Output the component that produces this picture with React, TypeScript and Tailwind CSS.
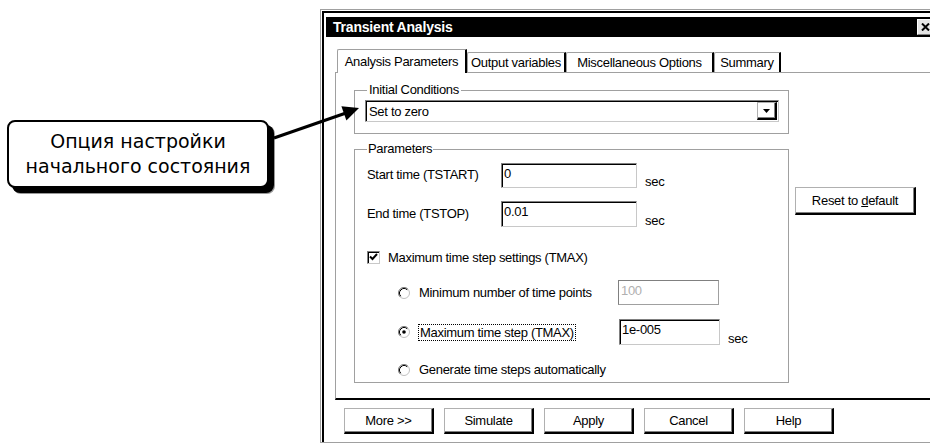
import React from 'react';

// Win95-style bevels, approximated in grey tones of the screenshot
const raised =
  'border border-t-[#b0b0b0] border-l-[#b0b0b0] border-r-2 border-b-2 border-r-black border-b-black shadow-[inset_-1px_-1px_0_#808080] bg-white';
const sunken =
  'border border-t-[#808080] border-l-[#808080] border-r-[#c8c8c8] border-b-[#c8c8c8] shadow-[inset_1px_1px_0_#000] bg-white';

const Radio = ({ checked = false }: { checked?: boolean }) => (
  <svg width="12" height="12" viewBox="0 0 12 12" className="shrink-0">
    <circle cx="6" cy="6" r="5.5" fill="#fff" stroke="#c0c0c0" />
    <path d="M2.11 9.89A5.5 5.5 0 0 1 9.89 2.11" fill="none" stroke="#808080" />
    <path d="M2.82 9.18A4.5 4.5 0 0 1 9.18 2.82" fill="none" stroke="#000" />
    {checked && <circle cx="6" cy="6" r="1.8" fill="#000" />}
  </svg>
);

const Field = ({ value, w, h, disabled = false }: { value: string; w: string; h: string; disabled?: boolean }) => (
  <div
    className={`${w} ${h} shrink-0 pl-[2px] pt-[2px] leading-[15px] ${
      disabled
        ? 'border border-[#a0a0a0] border-t-[#808080] border-l-[#808080] bg-white text-[#b0b0b0]'
        : sunken
    }`}
  >
    {value}
  </div>
);

const Tab = ({ label, w, active = false }: { label: string; w: string; active?: boolean }) => (
  <div
    className={`${w} flex shrink-0 justify-center rounded-tl-[2px] border-l border-t border-r-2 border-[#a0a0a0] border-r-black bg-white ${
      active ? 'relative z-10 -mb-px h-[24px] pt-[4px]' : 'h-[20px] pt-[2px]'
    }`}
  >
    {label}
  </div>
);

function Dialog() {
  return (
    <div className="mt-[9px] h-[434px] w-[620px] shrink-0 border-b border-l border-t border-[#a0a0a0]">
      <div className="ml-[1px] mt-[1px] h-[431px] border-l-2 border-t-2 border-black pl-[2px] pt-[4px]">
        {/* title bar */}
        <div className="flex h-[20px] items-center bg-black pl-[7px] pr-[7px]">
          <span className="text-[14px] font-bold tracking-[-0.2px] text-white">Transient Analysis</span>
          <div className="ml-auto flex h-[16px] w-[16px] items-center justify-center border border-b-[#808080] border-l-white border-r-[#808080] border-t-white bg-[#e4e4e4]">
            <svg width="9" height="8" viewBox="0 0 9 8">
              <path d="M1 0.5L8 7.5M8 0.5L1 7.5" stroke="#000" strokeWidth="2" />
            </svg>
          </div>
        </div>

        {/* tabs */}
        <div className="mt-[12px] flex h-[23px] items-end pl-[11px]">
          <Tab label="Analysis Parameters" w="w-[130px]" active />
          <Tab label="Output variables" w="w-[99px]" />
          <Tab label="Miscellaneous Options" w="w-[148px]" />
          <Tab label="Summary" w="w-[67px]" />
        </div>

        {/* tab page */}
        <div className="ml-[9px] flex h-[328px] border-b-2 border-l border-t border-[#a0a0a0] border-b-black">
          <div className="ml-[18px] w-[435px] shrink-0">
            <fieldset className="mt-[10px] border border-[#a0a0a0] pb-[11px] pl-[10px]">
              <legend className="ml-[2px] px-[2px] leading-[14px]">Initial Conditions</legend>
              <div className={`mt-[3px] flex h-[22px] w-[414px] items-center ${sunken}`}>
                <span className="pl-[3px]">Set to zero</span>
                <div className={`ml-auto mr-[1px] flex h-[18px] w-[20px] items-center justify-center ${raised}`}>
                  <svg width="7" height="4" viewBox="0 0 7 4">
                    <path d="M0 0h7L3.5 4z" fill="#000" />
                  </svg>
                </div>
              </div>
            </fieldset>

            <fieldset className="mt-[8px] h-[241px] border border-[#a0a0a0] pl-[12px]">
              <legend className="px-[1px] leading-[14px]">Parameters</legend>

              <div className="mt-[7px] flex">
                <span className="w-[134px] shrink-0 pt-[4px]">Start time (TSTART)</span>
                <Field value="0" w="w-[136px]" h="h-[25px]" />
                <span className="ml-[8px] mt-[11px]">sec</span>
              </div>
              <div className="mt-[12px] flex">
                <span className="w-[134px] shrink-0 pt-[5px]">End time (TSTOP)</span>
                <Field value="0.01" w="w-[136px]" h="h-[26px]" />
                <span className="ml-[8px] mt-[12px]">sec</span>
              </div>

              <div className="mt-[21px] flex h-[16px] items-center gap-[8px]">
                <div className={`flex h-[13px] w-[13px] shrink-0 items-center justify-center ${sunken}`}>
                  <svg width="9" height="8" viewBox="0 0 9 8">
                    <path d="M1 3.5L3.5 6L8 1" fill="none" stroke="#000" strokeWidth="2" />
                  </svg>
                </div>
                <span>Maximum time step settings (TMAX)</span>
              </div>

              <div className="pl-[31px]">
                <div className="mt-[15px] flex h-[25px] items-center">
                  <div className="flex w-[220px] shrink-0 items-center gap-[9px]">
                    <Radio />
                    <span>Minimum number of time points</span>
                  </div>
                  <Field value="100" w="w-[101px]" h="h-[25px]" disabled />
                </div>
                <div className="mt-[14px] flex h-[26px] items-start">
                  <div className="flex h-[26px] w-[221px] shrink-0 items-center gap-[8px]">
                    <Radio checked />
                    <span className="border border-dotted border-black px-[1px] leading-[15px]">Maximum time step (TMAX)</span>
                  </div>
                  <Field value="1e-005" w="w-[101px]" h="h-[26px]" />
                  <span className="ml-[8px] mt-[12px]">sec</span>
                </div>
                <div className="mt-[12px] flex h-[25px] items-center gap-[9px]">
                  <Radio />
                  <span>Generate time steps automatically</span>
                </div>
              </div>
            </fieldset>
          </div>

          <div className="ml-[6px] mt-[114px]">
            <div className={`flex h-[28px] w-[121px] items-center justify-center ${raised}`}>
              <span>
                Reset to <span className="underline">d</span>efault
              </span>
            </div>
          </div>
        </div>

        {/* footer buttons */}
        <div className="ml-[18px] mt-[8px] flex gap-[10px]">
          {['More >>', 'Simulate', 'Apply', 'Cancel', 'Help'].map((b) => (
            <div key={b} className={`flex h-[26px] w-[90px] items-center justify-center ${raised}`}>
              {b}
            </div>
          ))}
        </div>
      </div>
    </div>
  );
}

export default function App() {
  return (
    <div className="relative flex h-[445px] w-[930px] overflow-hidden bg-white font-['Liberation_Sans',Arial,sans-serif] text-[13px] leading-[15px] tracking-[-0.3px] text-black">
      <div className="w-[320px] shrink-0 pl-[7px] pt-[120px]">
        <div className="flex h-[68px] w-[262px] flex-col items-center justify-center rounded-[8px] border-2 border-black bg-white font-['DejaVu_Sans',sans-serif] text-[19px] leading-[25px] tracking-normal shadow-[5px_5px_0_#000,6px_6px_0_#999]">
          <span>Опция настройки</span>
          <span>начального состояния</span>
        </div>
      </div>
      <Dialog />
      <svg className="pointer-events-none absolute left-0 top-0" width="930" height="445">
        <line x1="274" y1="138" x2="346" y2="113" stroke="#000" strokeWidth="3" />
        <polygon points="359,108 346.4,120.4 341.4,106.2" fill="#000" />
      </svg>
    </div>
  );
}
